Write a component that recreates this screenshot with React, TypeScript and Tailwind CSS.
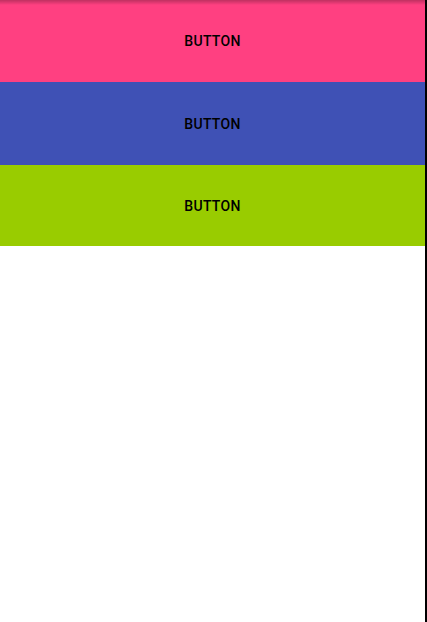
export default function App() {
  const buttons = [
    { bg: "bg-[#ff4081]", h: "h-[82px]" },
    { bg: "bg-[#3f51b5]", h: "h-[83px] pt-[1px]" },
    { bg: "bg-[#99cc00]", h: "h-[81px] pt-[2px]" },
  ];
  return (
    <div className="flex h-[622px] w-[427px] bg-white font-['Roboto',sans-serif]">
      <div className="relative flex flex-1 flex-col">
        {buttons.map((b, i) => (
          <button
            key={i}
            className={`flex w-full items-center justify-center text-[14px] font-medium tracking-[0.3px] text-black ${b.h} ${b.bg}`}
          >
            BUTTON
          </button>
        ))}
        <div className="absolute left-0 right-0 top-0 h-[5px] bg-gradient-to-b from-black/25 to-transparent" />
      </div>
      <div className="w-[2px] bg-black" />
    </div>
  );
}
